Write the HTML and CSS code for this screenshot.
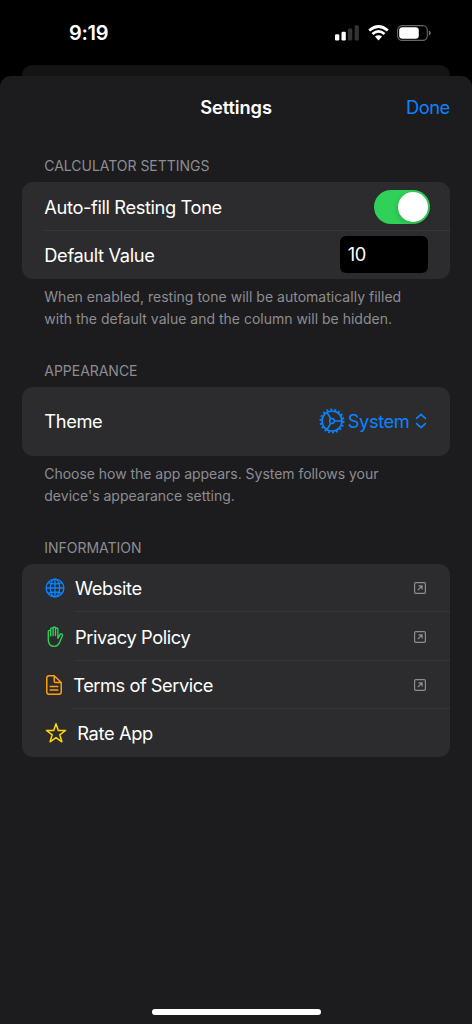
FILE: index.html
```html
<!DOCTYPE html>
<html lang="en">
<head>
<meta charset="utf-8">
<title>Settings</title>
<link rel="stylesheet" href="styles.css">
</head>
<body>
<svg class="defs" width="0" height="0">
  <symbol id="external" viewBox="0 0 12 12">
    <rect x=".6" y=".6" width="10.8" height="10.8" rx="1.3" fill="none" stroke="currentColor" stroke-width="1.2"/>
    <path d="M3.8 8.2 8 4M4.5 3.9H8.1V7.5" fill="none" stroke="currentColor" stroke-width="1.2"/>
  </symbol>
</svg>
<div class="screen">
  <div class="status">
    <span class="time">9:19</span>
    <div class="indicators">
      <svg class="signal" width="25" height="16" viewBox="0 0 25 16">
        <rect x="0" y="9.3" width="4.3" height="6.2" rx="1.2" fill="#fff"/>
        <rect x="6.5" y="6.7" width="4.3" height="8.8" rx="1.2" fill="#fff"/>
        <rect x="13" y="3.6" width="4.3" height="11.9" rx="1.2" fill="#333335"/>
        <rect x="19.6" y=".3" width="4.3" height="15.2" rx="1.2" fill="#333335"/>
      </svg>
      <svg class="wifi" width="21" height="16" viewBox="0 0 21 16">
        <path d="M1.2 5.5Q10.5-2.5 19.8 5.5M4.5 9Q10.5 3.7 16.5 9" fill="none" stroke="#fff" stroke-width="2.7"/>
        <path d="M6.9 11.6Q10.5 8.7 14.1 11.6L10.5 15.4Z" fill="#fff"/>
      </svg>
      <svg class="battery" width="34" height="16" viewBox="0 0 34 16">
        <rect x=".6" y=".6" width="29.7" height="14.8" rx="4.6" fill="none" stroke="#68686a" stroke-width="1.1"/>
        <rect x="2.2" y="2.2" width="19.6" height="11.6" rx="3.3" fill="#fff"/>
        <path d="M31.8 5.3Q33.9 6.2 33.9 8T31.8 10.7Z" fill="#68686a"/>
      </svg>
    </div>
  </div>
  <div class="backdrop"></div>
  <main class="sheet">
    <header class="nav">
      <span></span><h1>Settings</h1><a class="done">Done</a>
    </header>
    <section>
      <h2 class="label calc">CALCULATOR SETTINGS</h2>
      <div class="card">
        <div class="row inset"><span class="autofill">Auto-fill Resting Tone</span><span class="toggle"><i class="knob"></i></span></div>
        <div class="row"><span class="default">Default Value</span><span class="field">10</span></div>
      </div>
      <p class="note"><span class="n1">When enabled, resting tone will be automatically filled</span><br><span class="n2">with the default value and the column will be hidden.</span></p>
    </section>
    <section class="appearance">
      <h2 class="label">APPEARANCE</h2>
      <div class="card">
        <div class="row tall"><span class="theme">Theme</span>
          <span class="picker">
            <svg width="26" height="26" viewBox="-13 -13 26 26" fill="none" stroke="currentColor">
              <circle r="10" stroke-width="1.7"/>
              <circle r="11.6" stroke-width="1.8" stroke-dasharray="1.85 2.199"/>
              <circle r="2.4" stroke-width="1.5"/>
              <path d="M2.4 0H10M-1.2-2.1-5-8.7M-1.2 2.1-5 8.7" stroke-width="1.6"/>
            </svg>
            <span class="system">System</span>
            <svg class="chevrons" width="12" height="16" viewBox="0 0 12 16" fill="none" stroke="currentColor" stroke-width="1.6" stroke-linecap="round" stroke-linejoin="round"><path d="M1.6 5.4 6 1.4 10.4 5.4M1.6 10.6 6 14.6 10.4 10.6"/></svg>
          </span>
        </div>
      </div>
      <p class="note"><span class="n3">Choose how the app appears. System follows your</span><br><span class="n4">device's appearance setting.</span></p>
    </section>
    <section class="information">
      <h2 class="label info">INFORMATION</h2>
      <div class="card">
        <div class="row link web">
          <svg class="icon" width="20" height="20" viewBox="-10 -10 20 20" fill="none" stroke="#0a84ff" stroke-width="1.35"><circle r="8.9"/><ellipse rx="4.6" ry="8.9"/><path d="M0-9V9M-9 0H9M-7-5.3Q0-2.7 7-5.3M-7 5.3Q0 2.7 7 5.3"/></svg>
          <span class="t-web">Website</span><svg class="ext"><use href="#external"/></svg>
        </div>
        <div class="row link privacy">
          <svg class="icon" width="20" height="22" viewBox="0 0 20 22" fill="none" stroke="#30d158" stroke-width="1.35" stroke-linecap="round" stroke-linejoin="round"><path d="M3.3 11V5.6Q3.3 4.3 4.5 4.3T5.7 5.6V10M5.7 10V3.1Q5.7 1.9 6.9 1.9T8.1 3.1V9.6M8.1 9.6V2.2Q8.1 1 9.3 1T10.5 2.2V9.6M10.5 9.6V3.2Q10.5 2 11.7 2T12.9 3.2V12.4L15 8.6Q15.8 7.4 16.9 8 17.9 8.5 17.4 9.7L15.1 15.3C13.8 18.8 12.3 20.4 9.4 20.4 5.6 20.4 3.3 18 3.3 14V10.5"/></svg>
          <span class="t-privacy">Privacy Policy</span><svg class="ext"><use href="#external"/></svg>
        </div>
        <div class="row link terms">
          <svg class="icon" width="16" height="20" viewBox="0 0 16 20" fill="none" stroke="#ff9f0a" stroke-width="1.5" stroke-linecap="round" stroke-linejoin="round"><path d="M3 .8H8.2L15.2 7.5V17Q15.2 19.2 13 19.2H3Q.8 19.2 .8 17V3Q.8 .8 3 .8ZM8.2 1V6Q8.2 7.6 9.8 7.6H15M4.2 11.6H11.8M4.2 15H11.8"/></svg>
          <span class="t-terms">Terms of Service</span><svg class="ext"><use href="#external"/></svg>
        </div>
        <div class="row link rate">
          <svg class="icon" width="22" height="22" viewBox="0 0 22 22" fill="none" stroke="#ffd60a" stroke-width="1.5" stroke-linejoin="round"><path d="M11 1.7 13.3 8.5H20.5L14.8 12.8 16.9 19.8 11 15.6 5.1 19.8 7.2 12.8 1.5 8.5H8.7Z"/></svg>
          <span class="t-rate">Rate App</span>
        </div>
      </div>
    </section>
    <div class="home"></div>
  </main>
</div>
</body>
</html>
```
FILE: styles.css
```css
* { box-sizing: border-box; }
body { margin: 0; background: #000; color: #fff; font-family: Inter, "Liberation Sans", sans-serif; font-size: 18.3px; letter-spacing: -.38px; }
.defs { position: absolute; }
h1, h2, p { margin: 0; }
span { white-space: nowrap; }
.screen { width: 472px; height: 1024px; display: flex; flex-direction: column; overflow: hidden; }
.status { height: 65px; padding: 0 41.3px 0 69px; display: flex; justify-content: space-between; align-items: center; flex: none; }
.time { font-size: 20px; font-weight: 600; letter-spacing: -.3px; }
.indicators { display: flex; align-items: center; }
.signal { margin-right: .8px; }
.wifi { margin-left: 7px; }
.battery { margin-left: 8px; }
.backdrop { flex: none; height: 11px; margin: 0 22px; background: #141415; border-radius: 10px 10px 0 0; }
.sheet { flex: 1; display: flex; flex-direction: column; background: #1c1c1e; border-radius: 11px 11px 0 0; padding: 0 22.3px; }
.nav { height: 62px; display: grid; grid-template-columns: 1fr auto 1fr; align-items: center; }
h1 { font-size: 18.3px; font-weight: 600; letter-spacing: -.1px; }
.done { justify-self: end; color: #0a84ff; letter-spacing: -.5px; }
.label { height: 44.4px; padding: 17px 22px 0; font-size: 14px; line-height: 22px; font-weight: 400; color: #8d8d93; letter-spacing: -.03px; }
.card { background: #2c2c2e; border-radius: 11px; }
.row { position: relative; height: 48.3px; padding: 0 22px; display: flex; align-items: center; }
.row.inset::after, .link:not(:last-child)::after { content: ""; position: absolute; left: 22px; right: 0; bottom: 0; height: 1px; background: #373739; }
.row.tall { height: 68.6px; }
.autofill { letter-spacing: -.38px; }
.toggle { margin-left: auto; margin-right: -2.5px; width: 56px; height: 34px; border-radius: 17px; background: #30d158; padding: 2px; display: flex; justify-content: flex-end; }
.knob { width: 30px; height: 30px; border-radius: 50%; background: #fff; box-shadow: -1px 2px 5px rgba(0,0,0,.16); }
.field { margin-left: auto; width: 87.5px; height: 37px; border-radius: 6px; background: #000; padding-left: 7.5px; line-height: 37px; }
.note { padding: 7px 22px 0; height: 58.2px; font-size: 14px; line-height: 22px; color: #8d8d93; letter-spacing: 0; }
.n1 { letter-spacing: .015px; }
.n3 { letter-spacing: -.035px; }
.appearance { margin-top: 5.6px; }
.information { margin-top: 5.8px; }
.picker { margin-left: auto; margin-right: .7px; display: flex; align-items: center; color: #0a84ff; }
.system { margin-left: 3px; letter-spacing: -.38px; }
.chevrons { margin-left: 5.5px; }
.link .icon { flex: none; }
.link.web::after, .link.privacy::after { left: 53px; }
.link.terms::after { left: 50px; }
.web .icon { margin: 0 10px 0 .7px; }
.privacy .icon { margin: 0 9.7px 0 1px; }
.terms .icon { margin: 0 11.5px 0 1.5px; }
.rate .icon { margin: 0 10.3px 0 .7px; }
.t-terms { letter-spacing: -.48px; }
.t-privacy { letter-spacing: -.4px; }
.ext { width: 12px; height: 12px; margin-left: auto; margin-right: 1.3px; color: #8d8d93; }
.home { width: 169px; height: 5.5px; border-radius: 3px; background: #fff; margin: auto auto 9.3px; }
```
